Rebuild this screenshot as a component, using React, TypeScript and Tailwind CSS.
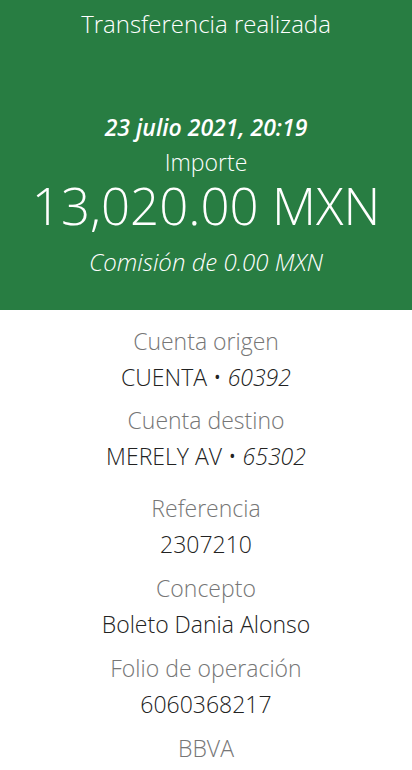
export default function App() {
  const rows = [
    { label: 'Cuenta origen', value: 'CUENTA', num: '60392', mt: 'mt-0' },
    { label: 'Cuenta destino', value: 'MERELY AV', num: '65302', mt: 'mt-[7px]' },
    { label: 'Referencia', value: '2307210', mt: 'mt-4' },
    { label: 'Concepto', value: 'Boleto Dania Alonso', mt: 'mt-2' },
    { label: 'Folio de operación', value: '6060368217', mt: 'mt-2' },
  ];

  return (
    <div className="min-h-screen bg-white text-center font-['Open_Sans',sans-serif] font-light">
      {/* Header */}
      <div className="h-[310px] bg-[#287d42] text-white flex flex-col items-center pt-[6px]">
        <h1 className="text-[24px] leading-[36px]">Transferencia realizada</h1>
        <p className="mt-[71px] text-[23px] leading-[28px] font-semibold italic">23 julio 2021, 20:19</p>
        <p className="mt-[7px] text-[23px] leading-[28px]">Importe</p>
        <p className="text-[51px] leading-[52px] mt-[3px]">13,020.00 MXN</p>
        <p className="mt-[16px] text-[24px] leading-[30px] italic">Comisión de 0.00 MXN</p>
      </div>

      {/* Detail */}
      <div className="pt-[13px] flex flex-col items-center">
        {rows.map((r) => (
          <div key={r.label} className={r.mt}>
            <p className="text-[23px] leading-[36px] text-[#767676]">{r.label}</p>
            <p className="text-[23px] leading-[36px] text-[#222]">
              {r.value}
              {r.num && (
                <>
                  {' • '}
                  <span className="italic">{r.num}</span>
                </>
              )}
            </p>
          </div>
        ))}
        <p className="mt-2 text-[23px] leading-[36px] text-[#767676]">BBVA</p>
      </div>
    </div>
  );
}
